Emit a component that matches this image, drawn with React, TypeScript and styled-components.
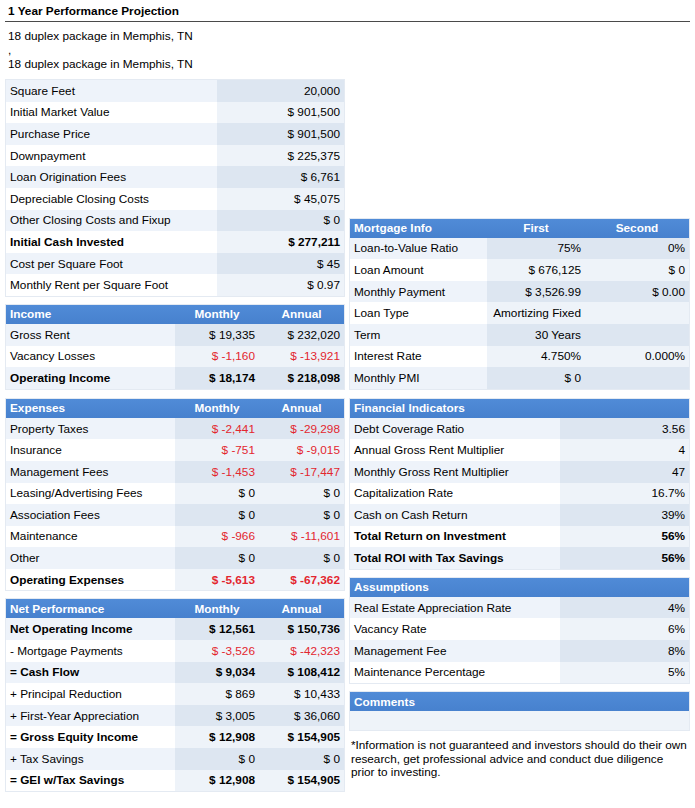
import React from 'react';
import styled, { createGlobalStyle } from 'styled-components';

const GlobalStyle = createGlobalStyle`
  html, body { margin: 0; padding: 0; background: #ffffff; }
  body {
    font-family: "Liberation Sans", Arial, sans-serif;
    font-size: 11.8px;
    color: #000;
  }
`;

const Page = styled.div`
  width: 685px;
  padding: 4px 5px 0 5px;
`;

const Title = styled.div`
  font-weight: bold;
  font-size: 11.8px;
  line-height: 14px;
  padding: 0 0 3px 3px;
  border-bottom: 1px solid #4a4a4a;
`;

const Desc = styled.div`
  margin-top: 7px;
  padding-left: 3px;
  line-height: 14px;
`;

const Section = styled.div<{ $align: string; $top: number }>`
  display: grid;
  grid-template-columns: 340px 341px;
  column-gap: 4px;
  align-items: ${(p) => p.$align};
  margin-top: ${(p) => p.$top}px;
`;

const Column = styled.div`
  display: flex;
  flex-direction: column;
  gap: 7px;
`;

const Panel = styled.div`
  border: 1px solid #e4eaf2;
  background: #f7f9fc;
`;

const HeaderRow = styled.div<{ $cols: string }>`
  display: grid;
  grid-template-columns: ${(p) => p.$cols};
  height: 19px;
  align-items: center;
  background: linear-gradient(#508bd7, #4781ce);
  color: #ffffff;
  font-weight: bold;
`;

const HeadCell = styled.div<{ $center?: boolean }>`
  padding: 0 4px;
  text-align: ${(p) => (p.$center ? 'center' : 'left')};
  white-space: nowrap;
`;

const Row = styled.div<{ $cols: string }>`
  display: grid;
  grid-template-columns: ${(p) => p.$cols};
  height: 21.6px;
`;

const Cell = styled.div<{ $value?: boolean; $odd: boolean; $bold?: boolean; $neg?: boolean }>`
  display: flex;
  align-items: center;
  justify-content: ${(p) => (p.$value ? 'flex-end' : 'flex-start')};
  padding: 0 4px;
  white-space: nowrap;
  font-weight: ${(p) => (p.$bold ? 'bold' : 'normal')};
  color: ${(p) => (p.$neg ? '#e3262f' : '#000')};
  background: ${(p) =>
    p.$value ? (p.$odd ? '#dde6f1' : '#eef3f9') : p.$odd ? '#eef3fa' : '#ffffff'};
`;

const CommentBody = styled.div`
  height: 19px;
  background: #eef3f9;
`;

const Footer = styled.div`
  margin-top: 7px;
  padding-left: 2px;
  font-size: 11.75px;
  line-height: 13.5px;
  white-space: nowrap;
`;

type Line = { label: string; values: string[]; bold?: boolean; neg?: boolean };

const DataTable: React.FC<{ cols: string; head?: string[]; rows: Line[]; children?: React.ReactNode }> = ({
  cols,
  head,
  rows,
  children,
}) => (
  <Panel>
    {head && (
      <HeaderRow $cols={cols}>
        {head.map((h, i) => (
          <HeadCell key={i} $center={i > 0}>
            {h}
          </HeadCell>
        ))}
      </HeaderRow>
    )}
    {rows.map((r, i) => (
      <Row key={i} $cols={cols}>
        <Cell $odd={i % 2 === 0} $bold={r.bold}>
          {r.label}
        </Cell>
        {r.values.map((v, j) => (
          <Cell key={j} $value $odd={i % 2 === 0} $bold={r.bold} $neg={r.neg && v.includes('-')}>
            {v}
          </Cell>
        ))}
      </Row>
    ))}
    {children}
  </Panel>
);

const summary: Line[] = [
  { label: 'Square Feet', values: ['20,000'] },
  { label: 'Initial Market Value', values: ['$ 901,500'] },
  { label: 'Purchase Price', values: ['$ 901,500'] },
  { label: 'Downpayment', values: ['$ 225,375'] },
  { label: 'Loan Origination Fees', values: ['$ 6,761'] },
  { label: 'Depreciable Closing Costs', values: ['$ 45,075'] },
  { label: 'Other Closing Costs and Fixup', values: ['$ 0'] },
  { label: 'Initial Cash Invested', values: ['$ 277,211'], bold: true },
  { label: 'Cost per Square Foot', values: ['$ 45'] },
  { label: 'Monthly Rent per Square Foot', values: ['$ 0.97'] },
];

const income: Line[] = [
  { label: 'Gross Rent', values: ['$ 19,335', '$ 232,020'] },
  { label: 'Vacancy Losses', values: ['$ -1,160', '$ -13,921'], neg: true },
  { label: 'Operating Income', values: ['$ 18,174', '$ 218,098'], bold: true },
];

const expenses: Line[] = [
  { label: 'Property Taxes', values: ['$ -2,441', '$ -29,298'], neg: true },
  { label: 'Insurance', values: ['$ -751', '$ -9,015'], neg: true },
  { label: 'Management Fees', values: ['$ -1,453', '$ -17,447'], neg: true },
  { label: 'Leasing/Advertising Fees', values: ['$ 0', '$ 0'] },
  { label: 'Association Fees', values: ['$ 0', '$ 0'] },
  { label: 'Maintenance', values: ['$ -966', '$ -11,601'], neg: true },
  { label: 'Other', values: ['$ 0', '$ 0'] },
  { label: 'Operating Expenses', values: ['$ -5,613', '$ -67,362'], bold: true, neg: true },
];

const net: Line[] = [
  { label: 'Net Operating Income', values: ['$ 12,561', '$ 150,736'], bold: true },
  { label: '- Mortgage Payments', values: ['$ -3,526', '$ -42,323'], neg: true },
  { label: '= Cash Flow', values: ['$ 9,034', '$ 108,412'], bold: true },
  { label: '+ Principal Reduction', values: ['$ 869', '$ 10,433'] },
  { label: '+ First-Year Appreciation', values: ['$ 3,005', '$ 36,060'] },
  { label: '= Gross Equity Income', values: ['$ 12,908', '$ 154,905'], bold: true },
  { label: '+ Tax Savings', values: ['$ 0', '$ 0'] },
  { label: '= GEI w/Tax Savings', values: ['$ 12,908', '$ 154,905'], bold: true },
];

const mortgage: Line[] = [
  { label: 'Loan-to-Value Ratio', values: ['75%', '0%'] },
  { label: 'Loan Amount', values: ['$ 676,125', '$ 0'] },
  { label: 'Monthly Payment', values: ['$ 3,526.99', '$ 0.00'] },
  { label: 'Loan Type', values: ['Amortizing Fixed', ''] },
  { label: 'Term', values: ['30 Years', ''] },
  { label: 'Interest Rate', values: ['4.750%', '0.000%'] },
  { label: 'Monthly PMI', values: ['$ 0', ''] },
];

const financial: Line[] = [
  { label: 'Debt Coverage Ratio', values: ['3.56'] },
  { label: 'Annual Gross Rent Multiplier', values: ['4'] },
  { label: 'Monthly Gross Rent Multiplier', values: ['47'] },
  { label: 'Capitalization Rate', values: ['16.7%'] },
  { label: 'Cash on Cash Return', values: ['39%'] },
  { label: 'Total Return on Investment', values: ['56%'], bold: true },
  { label: 'Total ROI with Tax Savings', values: ['56%'], bold: true },
];

const assumptions: Line[] = [
  { label: 'Real Estate Appreciation Rate', values: ['4%'] },
  { label: 'Vacancy Rate', values: ['6%'] },
  { label: 'Management Fee', values: ['8%'] },
  { label: 'Maintenance Percentage', values: ['5%'] },
];

const TWO = '211px 1fr';
const THREE = '169px 84px 1fr';
const MORT = '137px 98px 1fr';
const RIGHT = '210px 1fr';

export default function App() {
  return (
    <Page>
      <GlobalStyle />
      <Title>1 Year Performance Projection</Title>
      <Desc>
        <div>18 duplex package in Memphis, TN</div>
        <div>,</div>
        <div>18 duplex package in Memphis, TN</div>
      </Desc>
      <Section $align="end" $top={8}>
        <Column>
          <DataTable cols={TWO} rows={summary} />
          <DataTable cols={THREE} head={['Income', 'Monthly', 'Annual']} rows={income} />
        </Column>
        <Column>
          <DataTable cols={MORT} head={['Mortgage Info', 'First', 'Second']} rows={mortgage} />
        </Column>
      </Section>
      <Section $align="start" $top={8}>
        <Column>
          <DataTable cols={THREE} head={['Expenses', 'Monthly', 'Annual']} rows={expenses} />
          <DataTable cols={THREE} head={['Net Performance', 'Monthly', 'Annual']} rows={net} />
        </Column>
        <Column>
          <DataTable cols={RIGHT} head={['Financial Indicators']} rows={financial} />
          <DataTable cols={RIGHT} head={['Assumptions']} rows={assumptions} />
          <div>
            <DataTable cols="1fr" head={['Comments']} rows={[]}>
              <CommentBody />
            </DataTable>
            <Footer>
              *Information is not guaranteed and investors should do their own
              <br />
              research, get professional advice and conduct due diligence
              <br />
              prior to investing.
            </Footer>
          </div>
        </Column>
      </Section>
    </Page>
  );
}
